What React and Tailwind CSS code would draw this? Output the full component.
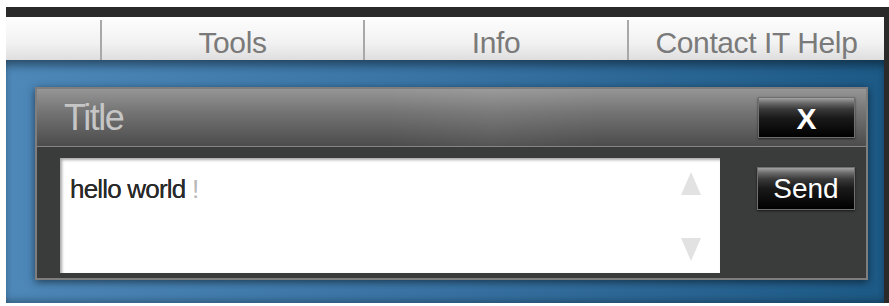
import React from 'react';

const navItems = ['Tools', 'Info', 'Contact IT Help'];

function Arrow({ up }) {
  return (
    <svg width="22" height="25" viewBox="0 0 22 25" className="blur-[0.6px]">
      {up ? (
        <polygon points="11,1 21,24 1,24" fill="#e2e2e2" />
      ) : (
        <polygon points="1,1 21,1 11,24" fill="#e2e2e2" />
      )}
    </svg>
  );
}

function BlackButton({ children, className }) {
  return (
    <div
      role="button"
      className={
        'relative flex items-center justify-center border border-[#707070] text-white leading-none shadow-[0_1px_2px_rgba(0,0,0,0.6)] bg-[linear-gradient(180deg,#a2a2a2_0px,#6a6a6a_5px,#3a3a3a_11px,#1a1a1a_20px,#000_100%)] ' +
        className
      }
    >
      {children}
    </div>
  );
}

export default function App() {
  return (
    <div className="w-[889px] h-[306px] bg-white pt-[7px] pl-[6px] font-['Liberation_Sans',Arial,sans-serif]">
      <div className="w-[883px] h-[296px] bg-[#2a2a2a] pt-[10px] pr-[5px] flex flex-col">
        {/* top nav */}
        <div className="h-[43px] grid grid-cols-[94px_263px_264px_1fr] bg-[linear-gradient(180deg,#fdfdfd,#f2f2f2_60%,#dedede)]">
          <div />
          {navItems.map((item) => (
            <div
              key={item}
              className="mt-[3px] mb-[2px] border-l-2 border-[#a8a8a8] flex items-center justify-center pb-[1px] text-[30px] text-[#7a7a7a] tracking-[-0.4px]"
            >
              {item}
            </div>
          ))}
        </div>

        {/* blue desktop */}
        <div className="flex-1 bg-gradient-to-r from-[#4d88b9] via-[#3873a4] to-[#1d5a86] shadow-[inset_0_9px_10px_-4px_rgba(0,0,0,0.45),inset_0_-6px_8px_-4px_rgba(0,0,0,0.35)] pt-[27px] pl-[29px]">
          <div className="w-[833px] h-[193px] border-2 border-[#7e7e7e] flex flex-col shadow-[0_2px_8px_rgba(0,0,0,0.55)]">
            {/* title bar */}
            <div className="h-[57px] flex items-start justify-between pl-[27px] pr-[11px] bg-[linear-gradient(to_right,transparent_42%,rgba(255,255,255,0.05)_55%,transparent_68%),linear-gradient(to_bottom,#969696,#747474_40%,#4c4c4c)]">
              <span className="self-center text-[36px] text-[#c6c6c6] tracking-[-1.5px] leading-none">Title</span>
              <BlackButton className="mt-[8px] w-[97px] h-[41px] text-[30px] font-bold pt-[2px]">X</BlackButton>
            </div>
            <div className="h-px bg-[#858585]" />

            {/* body */}
            <div className="flex-1 bg-[#3a3c3b] flex items-start pl-[23px] pr-[11px] pt-[11px]">
              <div className="w-[660px] h-[115px] bg-white shadow-[inset_2px_2px_3px_rgba(0,0,0,0.35)] flex">
                <div className="flex-1 pl-[10px] pt-[16px] text-[26px] leading-[30px] text-[#2a2a2a] tracking-[-0.8px] [text-shadow:0_0_0.6px_#2a2a2a]">
                  hello world <span className="text-[#b8b8b8] [text-shadow:none]">!</span>
                </div>
                <div className="w-[50px] flex flex-col items-center justify-between pt-[13px] pb-[11px] pr-[8px]">
                  <Arrow up />
                  <Arrow />
                </div>
              </div>
              <BlackButton className="ml-[37px] mt-[9px] w-[98px] h-[43px] text-[28px] pt-[1px]">Send</BlackButton>
            </div>
          </div>
        </div>
      </div>
    </div>
  );
}
